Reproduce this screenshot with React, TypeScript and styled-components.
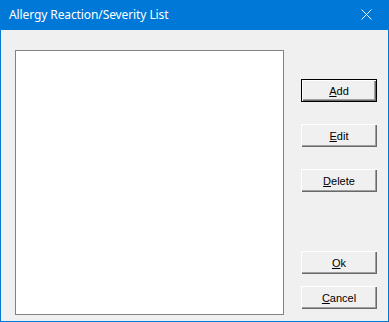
import React from 'react';
import styled, { createGlobalStyle, css } from 'styled-components';

const GlobalStyle = createGlobalStyle`
  html, body {
    margin: 0;
    padding: 0;
    background: #f0f0f0;
  }
`;

// 창 전체
const Window = styled.div`
  width: 389px;
  height: 322px;
  box-sizing: border-box;
  border: 1px solid #0078d7;
  border-top: none;
  background: #f0f0f0;
  display: flex;
  flex-direction: column;
`;

const TitleBar = styled.div`
  height: 30px;
  margin: 0 -1px;
  background: #0078d7;
  display: flex;
  align-items: center;
  justify-content: space-between;
  padding: 0 0 1px 9px;
  box-sizing: border-box;
`;

const Title = styled.div`
  font-family: 'Noto Sans', 'Open Sans', sans-serif;
  font-size: 12px;
  color: #ffffff;
  letter-spacing: -0.1px;
`;

const CloseButton = styled.div`
  width: 46px;
  height: 29px;
  display: flex;
  align-items: center;
  justify-content: center;
`;

const Body = styled.div`
  flex: 1;
  display: flex;
  padding: 20px 0 6px 14px;
  box-sizing: border-box;
`;

const ListBox = styled.div`
  width: 269px;
  height: 265px;
  box-sizing: border-box;
  background: #ffffff;
  border: 1px solid #828282;
`;

const ButtonColumn = styled.div`
  margin-left: 17px;
  padding: 29px 0 6px;
  display: flex;
  flex-direction: column;
  justify-content: space-between;
`;

const ButtonGroup = styled.div<{ $gap: number }>`
  display: flex;
  flex-direction: column;
  gap: ${(p) => p.$gap}px;
`;

const Button = styled.button<{ $default?: boolean }>`
  width: 76px;
  height: 23px;
  box-sizing: border-box;
  padding: 0;
  background: #f0f0f0;
  font-family: 'Liberation Sans', Arial, sans-serif;
  font-size: 11px;
  color: #000000;
  border: none;
  box-shadow: inset 1px 1px 0 #ffffff, inset -1px -1px 0 #696969, inset -2px -2px 0 #a0a0a0;
  ${(p) =>
    p.$default &&
    css`
      box-shadow: inset 0 0 0 1px #000000, inset 2px 2px 0 #ffffff, inset -2px -2px 0 #696969,
        inset -3px -3px 0 #a0a0a0;
    `}

  u {
    text-decoration: underline;
    text-underline-offset: 1px;
  }
`;

// 버튼 라벨 첫 글자에 밑줄
function Label({ text }: { text: string }) {
  return (
    <>
      <u>{text[0]}</u>
      {text.slice(1)}
    </>
  );
}

function App() {
  return (
    <>
      <GlobalStyle />
      <Window>
        <TitleBar>
          <Title>Allergy Reaction/Severity List</Title>
          <CloseButton>
            <svg width="11" height="11" viewBox="0 0 11 11">
              <path d="M0.5 0.5 L10.5 10.5 M10.5 0.5 L0.5 10.5" stroke="#ffffff" strokeWidth="1" />
            </svg>
          </CloseButton>
        </TitleBar>
        <Body>
          <ListBox />
          <ButtonColumn>
            <ButtonGroup $gap={22}>
              <Button $default>
                <Label text="Add" />
              </Button>
              <Button>
                <Label text="Edit" />
              </Button>
              <Button>
                <Label text="Delete" />
              </Button>
            </ButtonGroup>
            <ButtonGroup $gap={12}>
              <Button>
                <Label text="Ok" />
              </Button>
              <Button>
                <Label text="Cancel" />
              </Button>
            </ButtonGroup>
          </ButtonColumn>
        </Body>
      </Window>
    </>
  );
}

export default App;
